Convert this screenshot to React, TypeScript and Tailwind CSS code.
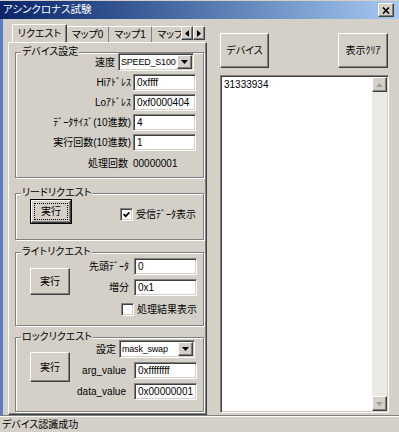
import React from 'react';

const raised =
  'bg-[#d4d0c8] border border-t-white border-l-white border-r-[#404040] border-b-[#404040] shadow-[inset_-1px_-1px_0_#808080]';
const sunken =
  'bg-white border border-t-[#808080] border-l-[#808080] border-r-white border-b-white shadow-[inset_1px_1px_0_#404040,inset_-1px_-1px_0_#d4d0c8]';

const DownArrow = ({ color = '#000' }: { color?: string }) => (
  <svg width="7" height="4" viewBox="0 0 7 4">
    <path d="M0 0h7L3.5 4z" fill={color} />
  </svg>
);

const UpArrow = ({ color = '#000' }: { color?: string }) => (
  <svg width="7" height="4" viewBox="0 0 7 4">
    <path d="M0 4h7L3.5 0z" fill={color} />
  </svg>
);

const Field = ({ value, className = '' }: { value: string; className?: string }) => (
  <div className={`${sunken} h-[17px] w-[63px] flex items-center pl-[3px] leading-none ${className}`}>{value}</div>
);

const Combo = ({ value, className = '' }: { value: string; className?: string }) => (
  <div className={`${sunken} w-[76px] h-[18px] p-[1px] flex items-center ${className}`}>
    <span className="flex-1 min-w-0 overflow-hidden whitespace-nowrap pl-[1px] leading-none text-[9px] tracking-[-0.2px]">{value}</span>
    <div className={`${raised} w-[15px] h-[14px] shrink-0 flex items-center justify-center`}>
      <DownArrow />
    </div>
  </div>
);

const Check = ({ checked }: { checked?: boolean }) => (
  <div className={`${sunken} w-[13px] h-[13px] flex items-center justify-center`}>
    {checked && (
      <svg width="7" height="7" viewBox="0 0 7 7">
        <path d="M0.6 3.2L2.7 5.3L6.4 1.4" stroke="#000" strokeWidth="1.7" fill="none" />
      </svg>
    )}
  </div>
);

const Group = ({ title, className = '', children }: { title: string; className?: string; children?: React.ReactNode }) => (
  <div className={`relative w-[189px] border border-[#808080] shadow-[inset_1px_1px_0_#fff,1px_1px_0_#fff] ${className}`}>
    <span className="absolute -top-[7px] left-[5px] px-[1px] bg-[#d4d0c8] leading-[12px]">{title}</span>
    {children}
  </div>
);

const Tab = ({ label, active, w }: { label: string; active?: boolean; w: string }) =>
  active ? (
    <div className={`${w} relative z-10 -mb-[1px] h-[19px] shrink-0 bg-[#d4d0c8] border-t border-l border-white border-r border-r-[#404040] shadow-[inset_-1px_0_0_#808080] flex items-center justify-center pb-[2px]`}>
      {label}
    </div>
  ) : (
    <div className={`${w} h-[16px] shrink-0 border-t border-t-white border-r border-r-[#808080] flex items-center justify-center whitespace-nowrap`}>
      {label}
    </div>
  );

export default function App() {
  return (
    <div className="w-[399px] h-[432px] pt-[1px] bg-[#d4d0c8] text-black text-[10px] font-['Liberation_Sans','Noto_Sans_CJK_JP',sans-serif] [font-feature-settings:'palt'] overflow-hidden flex flex-col">
      {/* title bar */}
      <div className="h-[18px] shrink-0 flex items-center pl-[3px] bg-linear-to-r from-[#0a246a] to-[#a6caf0] text-white text-[10.5px]">
        <span>アシンクロナス試験</span>
        <div className={`${raised} ml-auto mr-[5px] w-[16px] h-[14px] flex items-center justify-center`}>
          <svg width="8" height="7" viewBox="0 0 8 7">
            <path d="M1 0.5L7 6.5M7 0.5L1 6.5" stroke="#000" strokeWidth="1.6" />
          </svg>
        </div>
      </div>

      {/* body */}
      <div className="h-[396px] shrink-0 flex border-l-[3px] border-l-[#5d7eb8]">
        {/* tab control */}
        <div className="ml-[5px] w-[199px] mt-[5px] flex flex-col">
          <div className="h-[18px] flex items-end">
            <div className="flex-1 min-w-0 overflow-hidden flex items-end pl-[4px]">
              <Tab label="リクエスト" active w="w-[55px]" />
              <Tab label="マップ0" w="w-[42px]" />
              <Tab label="マップ1" w="w-[43px]" />
              <Tab label="マップ2" w="w-[43px]" />
            </div>
            <div className="flex mb-[2px] mr-[2px]">
              <div className={`${raised} w-[12px] h-[14px] flex items-center justify-center`}>
                <svg width="4" height="7" viewBox="0 0 4 7">
                  <path d="M4 0v7L0 3.5z" fill="#000" />
                </svg>
              </div>
              <div className={`${raised} w-[12px] h-[14px] flex items-center justify-center`}>
                <svg width="4" height="7" viewBox="0 0 4 7">
                  <path d="M0 0v7l4-3.5z" fill="#000" />
                </svg>
              </div>
            </div>
          </div>

          <div className="h-[373px] border border-t-white border-l-white border-r-[#404040] border-b-[#404040] shadow-[inset_-1px_-1px_0_#808080] pl-[6px] pt-[9px]">
            <Group title="デバイス設定" className="h-[126px]">
              <div className="flex items-center h-[18px]">
                <span className="w-[99px] text-right">速度</span>
                <Combo value="SPEED_S100" className="ml-[3px]" />
              </div>
              {[
                ['Hiｱﾄﾞﾚｽ', '0xffff'],
                ['Loｱﾄﾞﾚｽ', '0xf0000404'],
                ['ﾃﾞｰﾀｻｲｽﾞ(10進数)', '4'],
                ['実行回数(10進数)', '1'],
              ].map(([l, v]) => (
                <div key={l} className="flex items-center mt-[3px]">
                  <span className="w-[115px] text-right whitespace-nowrap">{l}</span>
                  <Field value={v} className="ml-[2px]" />
                </div>
              ))}
              <div className="flex items-center h-[14px] mt-[5px]">
                <span className="w-[112px] text-right">処理回数</span>
                <span className="ml-[5px]">00000001</span>
              </div>
            </Group>

            <Group title="リードリクエスト" className="h-[47px] mt-[15px] flex items-start">
              <div className="ml-[14px] mt-[5px] w-[42px] h-[25px] border border-black flex">
                <div className={`${raised} flex-1 flex p-[2px]`}>
                  <div className="flex-1 border border-dotted border-black flex items-center justify-center">実行</div>
                </div>
              </div>
              <div className="ml-[48px] mt-[14px] flex items-center gap-[3px]">
                <Check checked />
                <span className="leading-none">受信ﾃﾞｰﾀ表示</span>
              </div>
            </Group>

            <Group title="ライトリクエスト" className="h-[74px] mt-[12px] flex items-start">
              <div className={`${raised} ml-[14px] mt-[15px] w-[40px] h-[27px] flex items-center justify-center`}>実行</div>
              <div className="flex-1 flex flex-col items-end pr-[6px]">
                <div className="flex items-center mt-[5px]">
                  <span>先頭ﾃﾞｰﾀ</span>
                  <Field value="0" className="ml-[5px]" />
                </div>
                <div className="flex items-center mt-[4px]">
                  <span>増分</span>
                  <Field value="0x1" className="ml-[5px]" />
                </div>
                <div className="flex items-center gap-[3px] mt-[7px]">
                  <Check />
                  <span className="leading-none">処理結果表示</span>
                </div>
              </div>
            </Group>

            <Group title="ロックリクエスト" className="h-[75px] mt-[11px] flex items-start">
              <div className={`${raised} ml-[14px] mt-[14px] w-[40px] h-[30px] flex items-center justify-center`}>実行</div>
              <div className="flex-1 flex flex-col items-end pr-[6px]">
                <div className="flex items-center mt-[2px] mr-[2px]">
                  <span>設定</span>
                  <Combo value="mask_swap" className="ml-[3px]" />
                </div>
                <div className="flex items-center mt-[4px]">
                  <span>arg_value</span>
                  <Field value="0xffffffff" className="ml-[8px]" />
                </div>
                <div className="flex items-center mt-[4px]">
                  <span>data_value</span>
                  <Field value="0x00000001" className="ml-[8px]" />
                </div>
              </div>
            </Group>
          </div>
        </div>

        {/* right column */}
        <div className="ml-[13px] w-[169px] mt-[14px] flex flex-col">
          <div className="flex">
            <div className={`${raised} w-[49px] h-[35px] flex items-center justify-center`}>デバイス</div>
            <div className={`${raised} ml-auto mr-[1px] w-[50px] h-[35px] flex items-center justify-center`}>表示ｸﾘｱ</div>
          </div>
          <div className={`${sunken} mt-[7px] h-[338px] p-[1px] flex`}>
            <div className="flex-1 pl-[2px] pt-[2px] leading-[11px]">31333934</div>
            <div className="w-[15px] flex flex-col bg-[#ebe9e4]">
              <div className={`${raised} h-[15px] flex items-center justify-center`}>
                <UpArrow color="#a0a0a0" />
              </div>
              <div className="flex-1" />
              <div className={`${raised} h-[15px] flex items-center justify-center`}>
                <DownArrow color="#a0a0a0" />
              </div>
            </div>
          </div>
        </div>
      </div>

      {/* status bar */}
      <div className="flex-1 border-t border-t-[#808080] shadow-[inset_0_1px_0_#fff] flex items-center pl-[2px]">
        デバイス認識成功
      </div>
    </div>
  );
}
